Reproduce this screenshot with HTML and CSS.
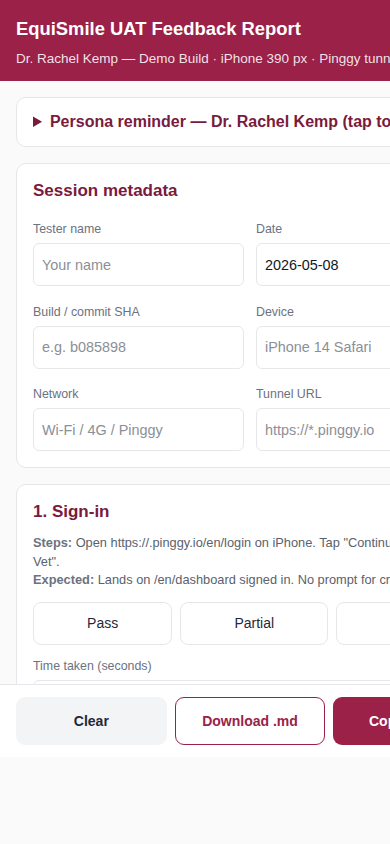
FILE: index.html
```
<!DOCTYPE html>
<html lang="en">

<head>
    <meta charset="UTF-8">
    <meta name="viewport" content="width=device-width, initial-scale=1.0">
    <title>EquiSmile UAT Feedback Report</title>
    <link rel="stylesheet" href="styles.css">
</head>

<body>
    <div class="app">
        <header class="topbar">
            <h1 class="title">EquiSmile UAT Feedback Report</h1>
            <p class="subtitle">Dr. Rachel Kemp — Demo Build · iPhone 390 px · Pinggy tunnel</p>
        </header>

        <main class="content">
            <details class="card persona">
                <summary>Persona reminder — Dr. Rachel Kemp (tap to expand)</summary>
                <p class="steps">Equine dentist, 12 years in practice, visits 4–6 yards a day. Uses her phone between
                    horses with gloves on.</p>
            </details>

            <section class="card">
                <h2 class="cardtitle">Session metadata</h2>
                <div class="metagrid">
                    <div class="field">
                        <label for="tester">Tester name</label>
                        <input id="tester" type="text" placeholder="Your name">
                    </div>
                    <div class="field">
                        <label for="date">Date</label>
                        <input id="date" type="text" value="2026-05-08">
                    </div>
                    <div class="field">
                        <label for="sha">Build / commit SHA</label>
                        <input id="sha" type="text" placeholder="e.g. b085898">
                    </div>
                    <div class="field">
                        <label for="device">Device</label>
                        <input id="device" type="text" placeholder="iPhone 14 Safari">
                    </div>
                    <div class="field">
                        <label for="network">Network</label>
                        <input id="network" type="text" placeholder="Wi-Fi / 4G / Pinggy">
                    </div>
                    <div class="field">
                        <label for="tunnel">Tunnel URL</label>
                        <input id="tunnel" type="text" placeholder="https://*.pinggy.io">
                    </div>
                </div>
            </section>

            <section class="card">
                <h2 class="cardtitle">1. Sign-in</h2>
                <p class="steps"><b>Steps:</b> Open https://.pinggy.io/en/login on iPhone. Tap "Continue as Demo
                    Vet".</p>
                <p class="steps"><b>Expected:</b> Lands on /en/dashboard signed in. No prompt for credentials.</p>
                <div class="verdicts">
                    <button class="verdict">Pass</button>
                    <button class="verdict">Partial</button>
                    <button class="verdict">Fail</button>
                </div>
                <div class="field timefield">
                    <label for="time1">Time taken (seconds)</label>
                    <input id="time1" type="text" placeholder="e.g. 12">
                </div>
            </section>
        </main>

        <footer class="actionbar">
            <button class="action clear">Clear</button>
            <button class="action download">Download .md</button>
            <button class="action copy">Copy report</button>
        </footer>
    </div>
</body>

</html>
```

FILE: styles.css
```
body {
    margin: 0;
    background-color: #fafafa;
    font-family: "Liberation Sans", Arial, Helvetica, sans-serif;
    color: #1f2937;
}

.app {
    width: 500px;
    height: 757px;
    display: flex;
    flex-direction: column;
}

.topbar {
    flex: none;
    background-color: #9b2149;
    color: white;
    padding: 18px 16px 14px 16px;
}

.title {
    margin: 0 0 12px 0;
    font-size: 18.4px;
    line-height: 21px;
    font-weight: bold;
}

.subtitle {
    margin: 0;
    font-size: 13.5px;
    line-height: 16px;
    color: rgba(255, 255, 255, 0.88);
    white-space: nowrap;
}

.content {
    flex: 1;
    min-height: 0;
    overflow: hidden;
    padding: 16px;
    display: flex;
    flex-direction: column;
    gap: 16px;
}

.card {
    flex: none;
    background-color: white;
    border: 1px solid #e5e7eb;
    border-radius: 10px;
    padding: 16px;
}

.persona {
    padding: 14px 16px;
}

.persona summary {
    font-size: 16px;
    line-height: 20px;
    font-weight: bold;
    color: #7a1a3c;
    white-space: nowrap;
    cursor: pointer;
}

.cardtitle {
    margin: 0 0 11px 0;
    font-size: 17px;
    line-height: 22px;
    font-weight: bold;
    color: #7a1a3c;
}

.metagrid {
    padding-top: 9px;
    display: grid;
    grid-template-columns: 1fr 1fr;
    column-gap: 12px;
    row-gap: 18.5px;
}

.field {
    display: flex;
    flex-direction: column;
}

.field label {
    font-size: 12.4px;
    line-height: 15px;
    color: #6b7280;
    margin-bottom: 6px;
}

.field input {
    box-sizing: border-box;
    height: 43px;
    padding: 0 8px;
    border: 1px solid #e5e7eb;
    border-radius: 6px;
    font-family: "Liberation Sans", Arial, Helvetica, sans-serif;
    font-size: 14.4px;
    color: #111827;
    background-color: white;
}

.field input::placeholder {
    color: #8b8f97;
}

.steps {
    margin: 0;
    font-size: 12.8px;
    line-height: 18.5px;
    color: #5b616b;
}

.steps b {
    color: #6b7280;
}

.verdicts {
    display: flex;
    gap: 8px;
    margin-top: 12px;
}

.verdict {
    flex: 1 1 auto;
    height: 43px;
    background-color: white;
    border: 1px solid #e5e7eb;
    border-radius: 8px;
    font-family: "Liberation Sans", Arial, Helvetica, sans-serif;
    font-size: 14px;
    color: #1f2937;
}

.timefield {
    margin-top: 14px;
}

.actionbar {
    flex: none;
    display: flex;
    gap: 8px;
    padding: 12px 16px;
    background-color: white;
    border-top: 1px solid #e5e7eb;
}

.action {
    flex: 1 1 0;
    height: 48px;
    border-radius: 9px;
    border: 1px solid transparent;
    font-family: "Liberation Sans", Arial, Helvetica, sans-serif;
    font-size: 14px;
    font-weight: bold;
}

.clear {
    background-color: #f3f4f6;
    color: #1f2937;
}

.download {
    background-color: white;
    border-color: #9b2149;
    color: #9b2149;
}

.copy {
    background-color: #9b2149;
    color: white;
}
```
